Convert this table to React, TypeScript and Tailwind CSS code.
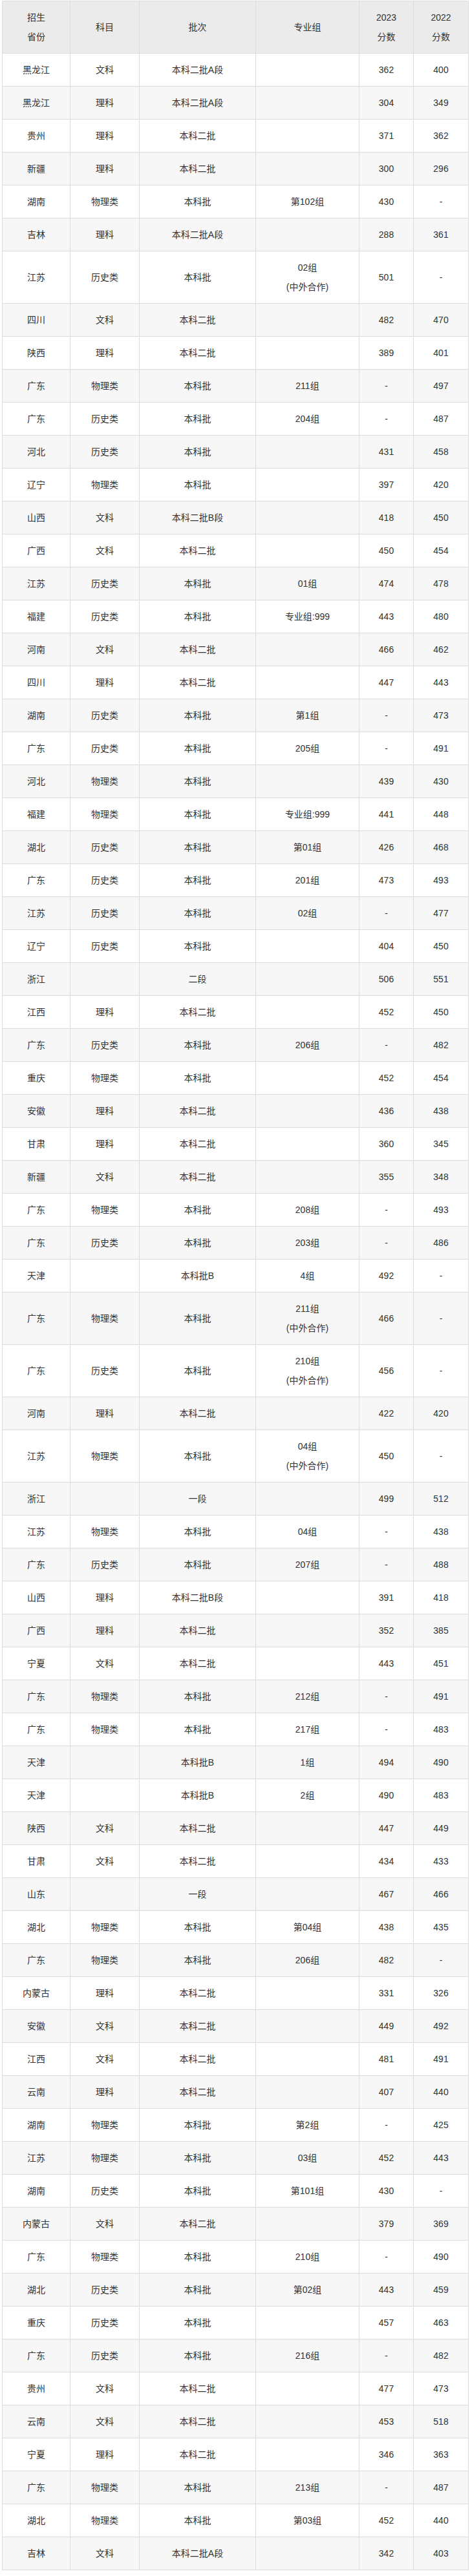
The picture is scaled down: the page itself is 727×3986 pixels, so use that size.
type Row = [string, string, string, string, string, string]

const rows: Row[] = [
  ["黑龙江", "文科", "本科二批A段", "", "362", "400"],
  ["黑龙江", "理科", "本科二批A段", "", "304", "349"],
  ["贵州", "理科", "本科二批", "", "371", "362"],
  ["新疆", "理科", "本科二批", "", "300", "296"],
  ["湖南", "物理类", "本科批", "第102组", "430", "-"],
  ["吉林", "理科", "本科二批A段", "", "288", "361"],
  ["江苏", "历史类", "本科批", "02组|(中外合作)", "501", "-"],
  ["四川", "文科", "本科二批", "", "482", "470"],
  ["陕西", "理科", "本科二批", "", "389", "401"],
  ["广东", "物理类", "本科批", "211组", "-", "497"],
  ["广东", "历史类", "本科批", "204组", "-", "487"],
  ["河北", "历史类", "本科批", "", "431", "458"],
  ["辽宁", "物理类", "本科批", "", "397", "420"],
  ["山西", "文科", "本科二批B段", "", "418", "450"],
  ["广西", "文科", "本科二批", "", "450", "454"],
  ["江苏", "历史类", "本科批", "01组", "474", "478"],
  ["福建", "历史类", "本科批", "专业组:999", "443", "480"],
  ["河南", "文科", "本科二批", "", "466", "462"],
  ["四川", "理科", "本科二批", "", "447", "443"],
  ["湖南", "历史类", "本科批", "第1组", "-", "473"],
  ["广东", "历史类", "本科批", "205组", "-", "491"],
  ["河北", "物理类", "本科批", "", "439", "430"],
  ["福建", "物理类", "本科批", "专业组:999", "441", "448"],
  ["湖北", "历史类", "本科批", "第01组", "426", "468"],
  ["广东", "历史类", "本科批", "201组", "473", "493"],
  ["江苏", "历史类", "本科批", "02组", "-", "477"],
  ["辽宁", "历史类", "本科批", "", "404", "450"],
  ["浙江", "", "二段", "", "506", "551"],
  ["江西", "理科", "本科二批", "", "452", "450"],
  ["广东", "历史类", "本科批", "206组", "-", "482"],
  ["重庆", "物理类", "本科批", "", "452", "454"],
  ["安徽", "理科", "本科二批", "", "436", "438"],
  ["甘肃", "理科", "本科二批", "", "360", "345"],
  ["新疆", "文科", "本科二批", "", "355", "348"],
  ["广东", "物理类", "本科批", "208组", "-", "493"],
  ["广东", "历史类", "本科批", "203组", "-", "486"],
  ["天津", "", "本科批B", "4组", "492", "-"],
  ["广东", "物理类", "本科批", "211组|(中外合作)", "466", "-"],
  ["广东", "历史类", "本科批", "210组|(中外合作)", "456", "-"],
  ["河南", "理科", "本科二批", "", "422", "420"],
  ["江苏", "物理类", "本科批", "04组|(中外合作)", "450", "-"],
  ["浙江", "", "一段", "", "499", "512"],
  ["江苏", "物理类", "本科批", "04组", "-", "438"],
  ["广东", "历史类", "本科批", "207组", "-", "488"],
  ["山西", "理科", "本科二批B段", "", "391", "418"],
  ["广西", "理科", "本科二批", "", "352", "385"],
  ["宁夏", "文科", "本科二批", "", "443", "451"],
  ["广东", "物理类", "本科批", "212组", "-", "491"],
  ["广东", "物理类", "本科批", "217组", "-", "483"],
  ["天津", "", "本科批B", "1组", "494", "490"],
  ["天津", "", "本科批B", "2组", "490", "483"],
  ["陕西", "文科", "本科二批", "", "447", "449"],
  ["甘肃", "文科", "本科二批", "", "434", "433"],
  ["山东", "", "一段", "", "467", "466"],
  ["湖北", "物理类", "本科批", "第04组", "438", "435"],
  ["广东", "物理类", "本科批", "206组", "482", "-"],
  ["内蒙古", "理科", "本科二批", "", "331", "326"],
  ["安徽", "文科", "本科二批", "", "449", "492"],
  ["江西", "文科", "本科二批", "", "481", "491"],
  ["云南", "理科", "本科二批", "", "407", "440"],
  ["湖南", "物理类", "本科批", "第2组", "-", "425"],
  ["江苏", "物理类", "本科批", "03组", "452", "443"],
  ["湖南", "历史类", "本科批", "第101组", "430", "-"],
  ["内蒙古", "文科", "本科二批", "", "379", "369"],
  ["广东", "物理类", "本科批", "210组", "-", "490"],
  ["湖北", "历史类", "本科批", "第02组", "443", "459"],
  ["重庆", "历史类", "本科批", "", "457", "463"],
  ["广东", "历史类", "本科批", "216组", "-", "482"],
  ["贵州", "文科", "本科二批", "", "477", "473"],
  ["云南", "文科", "本科二批", "", "453", "518"],
  ["宁夏", "理科", "本科二批", "", "346", "363"],
  ["广东", "物理类", "本科批", "213组", "-", "487"],
  ["湖北", "物理类", "本科批", "第03组", "452", "440"],
  ["吉林", "文科", "本科二批A段", "", "342", "403"],
]

const cell = "border border-[#dcdcdc] text-center align-middle py-[10px] px-1 leading-[30px] font-normal"

function Lines({ text }: { text: string }) {
  const parts = text.split("|")
  return (
    <>
      {parts.map((p, i) => (
        <span key={i}>
          {i > 0 && <br />}
          {p}
        </span>
      ))}
    </>
  )
}

export default function App() {
  return (
    <div className="bg-white w-[727px] pt-px pb-3 font-['Liberation_Sans','Noto_Sans_CJK_SC',sans-serif] text-[14px] text-[#333]">
      <table className="ml-[3px] w-[721px] table-fixed border-collapse">
        <colgroup>
          <col className="w-[105px]" />
          <col className="w-[107px]" />
          <col className="w-[180px]" />
          <col className="w-[160px]" />
          <col className="w-[84px]" />
          <col className="w-[85px]" />
        </colgroup>
        <thead>
          <tr className="bg-[#ebebeb]">
            <th className={cell}>招生<br />省份</th>
            <th className={cell}>科目</th>
            <th className={cell}>批次</th>
            <th className={cell}>专业组</th>
            <th className={cell}>2023<br />分数</th>
            <th className={cell}>2022<br />分数</th>
          </tr>
        </thead>
        <tbody>
          {rows.map((r, i) => (
            <tr key={i} className={i % 2 === 1 ? "bg-[#f7f7f7]" : "bg-white"}>
              {r.map((c, j) => (
                <td key={j} className={cell}>
                  <Lines text={c} />
                </td>
              ))}
            </tr>
          ))}
        </tbody>
      </table>
    </div>
  )
}
